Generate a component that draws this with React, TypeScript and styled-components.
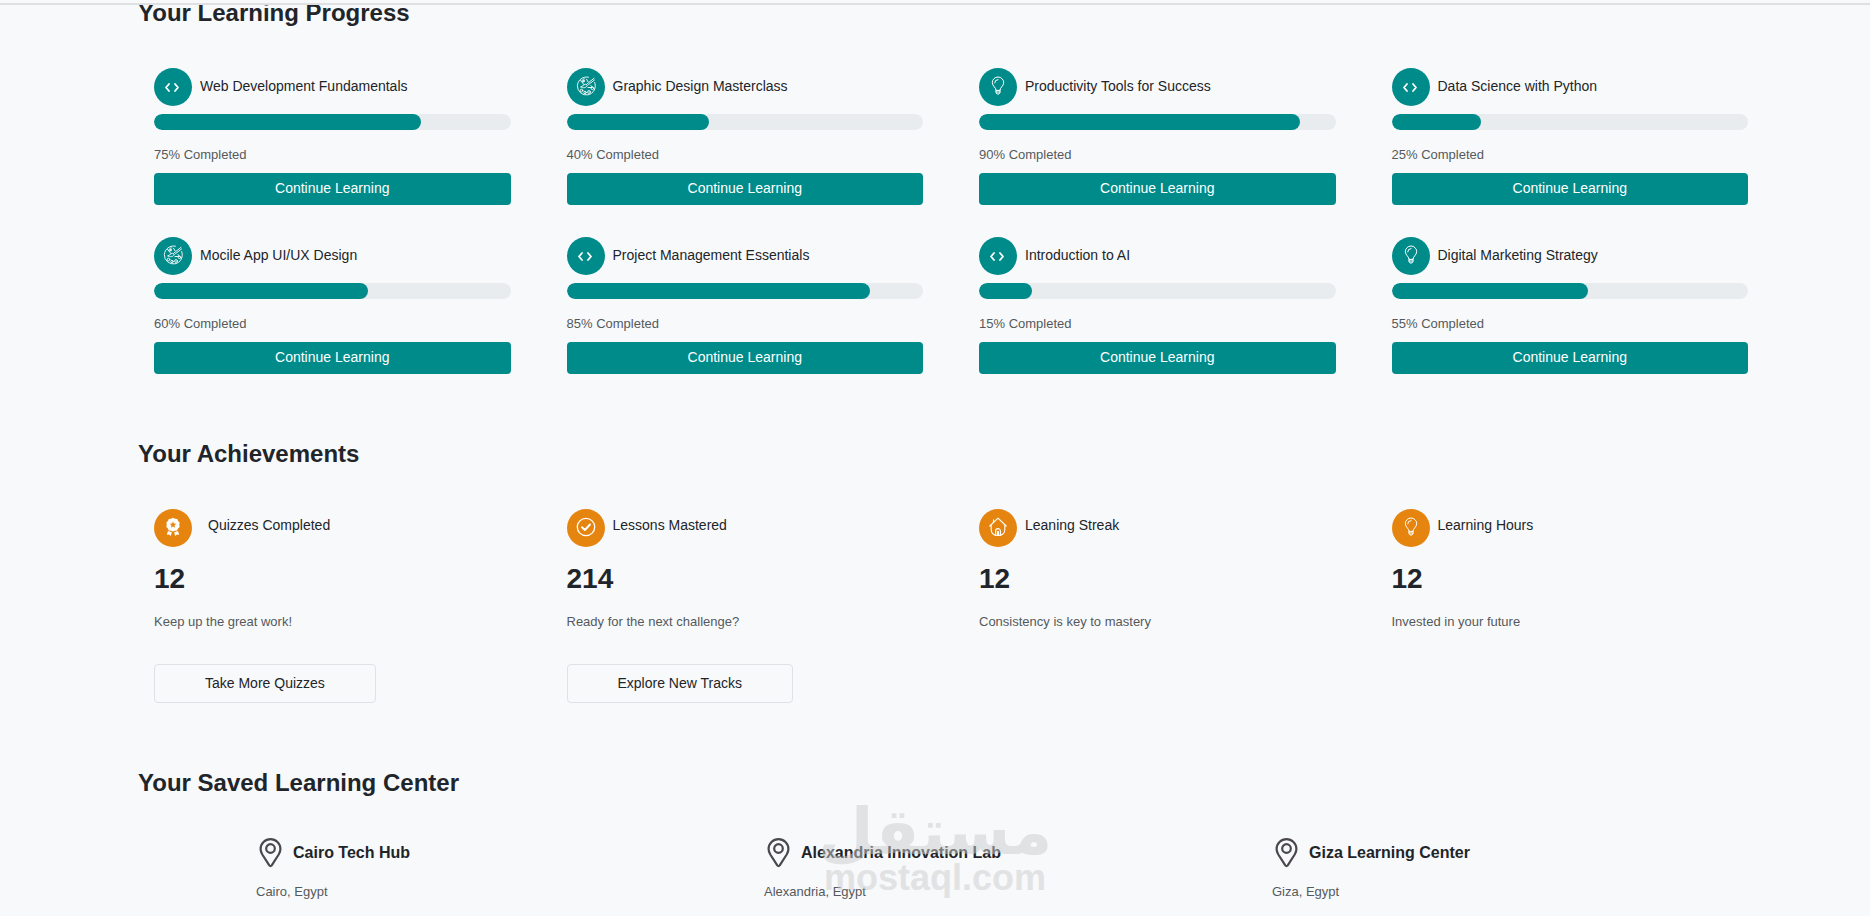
import React from "react";
import styled, { createGlobalStyle } from "styled-components";

const GlobalStyle = createGlobalStyle`
  * { box-sizing: border-box; }
  html, body { margin: 0; background: #f8f9fb; }
  body {
    color: #212529;
    font-family: "Liberation Sans", Arial, sans-serif;
    font-size: 14px;
  }
  h2, h3, p { margin: 0; }
`;

const Page = styled.div`
  position: relative;
  min-height: 100vh;
  background: #f8f9fb;
`;

const TopBar = styled.header`
  position: absolute;
  top: 0;
  left: 0;
  right: 0;
  height: 5px;
  background: #f8f9fb;
  border-bottom: 2px solid #dfe0e2;
`;

const Content = styled.main`
  display: flex;
  flex-direction: column;
  gap: 67px;
  padding: 0 94px 0 126px;
`;

const Section = styled.section`
  display: flex;
  flex-direction: column;
  gap: 42px;
`;

const SectionTitle = styled.h2`
  padding-left: 12px;
  font-size: 24px;
  line-height: 26px;
  font-weight: 700;
`;

const CardGrid = styled.div`
  display: grid;
  grid-template-columns: repeat(4, 1fr);
  gap: 32px 56px;
  padding: 0 28px;
`;

const CenterGrid = styled.div`
  display: grid;
  grid-template-columns: repeat(3, 1fr);
  column-gap: 24px;
  padding: 0 20px 0 130px;
`;

const Card = styled.article`
  display: flex;
  flex-direction: column;
  align-items: flex-start;
`;

const CardHead = styled.div`
  display: flex;
  align-items: center;
  gap: 8px;
`;

const IconCircle = styled.span<{ $tone: string }>`
  display: flex;
  align-items: center;
  justify-content: center;
  width: 38px;
  height: 38px;
  padding-bottom: 2px;
  border-radius: 50%;
  background: ${(p) => p.$tone};
  color: #ffffff;
`;

const CardTitle = styled.h3<{ $wide?: boolean; $raised?: boolean }>`
  padding: 0 0 ${(p) => (p.$raised ? 6 : 2)}px ${(p) => (p.$wide ? 8 : 0)}px;
  font-size: 14px;
  line-height: 20px;
  font-weight: 400;
`;

const Track = styled.div`
  width: 100%;
  height: 16px;
  margin: 8px 0 15px;
  border-radius: 8px;
  background: #e9ecef;
  overflow: hidden;
`;

const Fill = styled.div`
  height: 100%;
  border-radius: 8px;
  background: #008b8b;
`;

const Note = styled.p`
  color: #55595c;
  font-size: 13px;
  line-height: 20px;
`;

const PrimaryButton = styled.button`
  width: 100%;
  height: 32px;
  margin-top: 8px;
  padding: 0 0 2px;
  border: 0;
  border-radius: 4px;
  background: #008b8b;
  color: #ffffff;
  font: inherit;
`;

const Figure = styled.p`
  margin: 16px 0 17px;
  font-size: 28px;
  line-height: 32px;
  font-weight: 700;
`;

const OutlineButton = styled.button`
  height: 39px;
  margin-top: 32px;
  padding: 0 50px 2px;
  border: 1px solid #dee2e6;
  border-radius: 4px;
  background: transparent;
  color: #212529;
  font: inherit;
`;

const CenterTitle = styled.h3`
  font-size: 16px;
  line-height: 20px;
  font-weight: 700;
`;

const CenterNote = styled(Note)`
  margin-top: 14px;
`;

const Watermark = styled.div`
  position: absolute;
  left: 50%;
  bottom: 18px;
  transform: translateX(-50%);
  display: flex;
  flex-direction: column;
  align-items: center;
  color: #cccccc;
  opacity: 0.5;
  font-weight: 700;
  pointer-events: none;
`;

const WatermarkArabic = styled.span`
  font-family: "DejaVu Sans", sans-serif;
  font-size: 64px;
  line-height: 52px;
`;

const WatermarkLatin = styled.span`
  font-size: 36px;
  line-height: 40px;
`;

type IconName = "code" | "palette" | "bulb" | "award" | "check" | "house";

const icons: Record<IconName, React.ReactNode> = {
  code: <path d="M6 8 3 11.500 6 15M12 8l3 3.500L12 15" strokeWidth="1.800" />,
  palette: (
    <g strokeWidth="0.9">
      <path d="M12.500 1.200A9 9 0 1 0 18.700 6.500M4.500 4.500 8 8.500" />
      <path d="M18 2.300 11 8M18.500 4 12.500 8.600M9.300 8.300c-2 .2-2.500 2.200-4.800 2.600 2.500 1.400 6 1 6.700-1.200Z" />
      <path d="M8 2.500c-.8 1.600.8 2 0 3.300M10.500 3.200l1.500 2.500M12 11.500h4.500l-1.500-2" />
      <circle cx="5.500" cy="14.500" r="1.300" />
      <circle cx="9" cy="16.500" r="1.200" />
      <circle cx="13" cy="16" r="1.400" />
      <circle cx="16.500" cy="12.300" r="1.300" />
      <circle cx="7" cy="5" r="1.100" />
    </g>
  ),
  bulb: (
    <g strokeWidth="1">
      <path d="M8 14C8 11.500 4.300 10 4.300 6.700a5.700 5.700 0 0 1 11.400 0c0 3.300-3.700 4.800-3.700 7.300Z" />
      <path d="M8 14v2.300l1 1.700h2l1-1.700V14M8 16h4M6.700 6.900A3.300 3.300 0 0 1 10 3.600" />
    </g>
  ),
  award: (
    <g fill="currentColor" stroke="none">
      <path
        fillRule="evenodd"
        d="M10 .8l2 .9 2.200.3.900 2 1.500 1.600-.3 2.100.3 2.200-1.600 1.500-.9 2-2.100.3L10 14.600l-2-.9-2.200-.3-.9-2-1.500-1.500.3-2.200L3.400 5.600 4.900 4l.9-2L8 1.700ZM10 4.200 9.100 6.500l-2.500.2 1.900 1.600-.6 2.500L10 9.400l2.100 1.400-.6-2.500 1.900-1.600-2.500-.2Z"
      />
      <path d="M5 14l3.800 1.300L7.800 19l-1.700-1.600-2.300.3ZM15 14l-3.800 1.300 1 3.700 1.700-1.600 2.300.3Z" />
    </g>
  ),
  check: (
    <g>
      <circle cx="10" cy="10" r="8.700" strokeWidth="1.300" />
      <path d="M6 10.200 8.900 13 14 7.500" strokeWidth="1.900" />
    </g>
  ),
  house: (
    <g strokeWidth="1.100">
      <path d="M1.800 9 10 1.200 18.200 9M3.200 8.500v4c0 3.800 2 6 6.800 6s6.800-2.200 6.800-6v-4M5.500 5.300V2.800" />
      <path d="M7.600 18v-4a2.400 2.400 0 0 1 4.800 0v4M9.500 14.500h1v3.200h-1Z" />
    </g>
  ),
};

function Icon({ name }: { name: IconName }) {
  return (
    <svg
      width="20"
      height="20"
      viewBox="0 0 20 20"
      fill="none"
      stroke="currentColor"
      strokeLinecap="round"
      strokeLinejoin="round"
      aria-hidden="true"
    >
      {icons[name]}
    </svg>
  );
}

function PinIcon() {
  return (
    <svg
      width="29"
      height="30"
      viewBox="0 0 29 30"
      fill="none"
      stroke="#4a484c"
      strokeWidth="2.200"
      strokeLinejoin="round"
      aria-hidden="true"
    >
      <path d="M13.300 27.400 6.300 16.500C5.200 14.700 4.600 13 4.600 11a9.900 9.900 0 0 1 19.800 0c0 2-.6 3.700-1.700 5.500l-7 10.900q-1.200 1.400-2.400 0Z" />
      <circle cx="14.500" cy="10.500" r="4.300" />
    </svg>
  );
}

const courses: { title: string; icon: IconName; percent: number }[] = [
  { title: "Web Development Fundamentals", icon: "code", percent: 75 },
  { title: "Graphic Design Masterclass", icon: "palette", percent: 40 },
  { title: "Productivity Tools for Success", icon: "bulb", percent: 90 },
  { title: "Data Science with Python", icon: "code", percent: 25 },
  { title: "Mocile App UI/UX Design", icon: "palette", percent: 60 },
  { title: "Project Management Essentials", icon: "code", percent: 85 },
  { title: "Introduction to AI", icon: "code", percent: 15 },
  { title: "Digital Marketing Strategy", icon: "bulb", percent: 55 },
];

const achievements: {
  title: string;
  icon: IconName;
  value: number;
  note: string;
  action?: string;
  wide?: boolean;
}[] = [
  { title: "Quizzes Completed", icon: "award", value: 12, note: "Keep up the great work!", action: "Take More Quizzes", wide: true },
  { title: "Lessons Mastered", icon: "check", value: 214, note: "Ready for the next challenge?", action: "Explore New Tracks" },
  { title: "Leaning Streak", icon: "house", value: 12, note: "Consistency is key to mastery" },
  { title: "Learning Hours", icon: "bulb", value: 12, note: "Invested in your future" },
];

const centers = [
  { name: "Cairo Tech Hub", place: "Cairo, Egypt" },
  { name: "Alexandria Innovation Lab", place: "Alexandria, Egypt" },
  { name: "Giza Learning Center", place: "Giza, Egypt" },
];

export default function App() {
  return (
    <Page>
      <GlobalStyle />
      <Content>
        <Section>
          <SectionTitle>Your Learning Progress</SectionTitle>
          <CardGrid>
            {courses.map((c) => (
              <Card key={c.title}>
                <CardHead>
                  <IconCircle $tone="#008b8b">
                    <Icon name={c.icon} />
                  </IconCircle>
                  <CardTitle>{c.title}</CardTitle>
                </CardHead>
                <Track role="progressbar" aria-label={c.title} aria-valuenow={c.percent} aria-valuemin={0} aria-valuemax={100}>
                  <Fill style={{ width: `${c.percent}%` }} />
                </Track>
                <Note>{c.percent}% Completed</Note>
                <PrimaryButton type="button">Continue Learning</PrimaryButton>
              </Card>
            ))}
          </CardGrid>
        </Section>

        <Section>
          <SectionTitle>Your Achievements</SectionTitle>
          <CardGrid>
            {achievements.map((a) => (
              <Card key={a.title}>
                <CardHead>
                  <IconCircle $tone="#e5850f">
                    <Icon name={a.icon} />
                  </IconCircle>
                  <CardTitle $wide={a.wide} $raised>
                    {a.title}
                  </CardTitle>
                </CardHead>
                <Figure>{a.value}</Figure>
                <Note>{a.note}</Note>
                {a.action && <OutlineButton type="button">{a.action}</OutlineButton>}
              </Card>
            ))}
          </CardGrid>
        </Section>

        <Section>
          <SectionTitle>Your Saved Learning Center</SectionTitle>
          <CenterGrid>
            {centers.map((c) => (
              <Card key={c.name}>
                <CardHead>
                  <PinIcon />
                  <CenterTitle>{c.name}</CenterTitle>
                </CardHead>
                <CenterNote>{c.place}</CenterNote>
              </Card>
            ))}
          </CenterGrid>
        </Section>
      </Content>
      <TopBar />
      <Watermark>
        <WatermarkArabic lang="ar" dir="rtl">مستقل</WatermarkArabic>
        <WatermarkLatin>mostaql.com</WatermarkLatin>
      </Watermark>
    </Page>
  );
}
